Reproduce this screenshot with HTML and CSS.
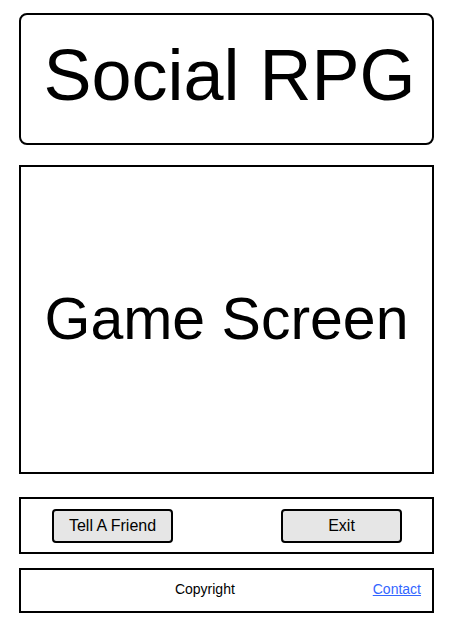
FILE: index.html
```html
<!DOCTYPE html>
<html lang="en">
<head>
<meta charset="UTF-8">
<title>Social RPG</title>
<link rel="stylesheet" href="styles.css">
</head>
<body>
<div class="page">
<header class="titre">Social RPG</header>
<main class="ecran">Game Screen</main>
<div class="barre">
<button class="btn">Tell A Friend</button>
<button class="btn">Exit</button>
</div>
<footer class="pied">
<span class="copyright">Copyright</span>
<a href="#" class="contact">Contact</a>
</footer>
</div>
</body>
</html>
```

FILE: styles.css
```css
body {
margin: 0;
font-family: "Liberation Sans", Arial, sans-serif;
background: #fff;
color: #000;
}
.page {
padding: 13px 20px 0 19px;
display: flex;
flex-direction: column;
}
.titre {
height: 132px;
box-sizing: border-box;
border: 2px solid #000;
border-radius: 8px;
display: flex;
align-items: center;
justify-content: center;
font-size: 72px;
padding: 0 0 8px 6px;
margin-bottom: 20px;
}
.ecran {
height: 309px;
box-sizing: border-box;
border: 2px solid #000;
display: flex;
align-items: center;
justify-content: center;
font-size: 59px;
padding-bottom: 2px;
margin-bottom: 23px;
}
.barre {
height: 57px;
box-sizing: border-box;
border: 2px solid #000;
display: flex;
align-items: center;
justify-content: space-between;
padding: 0 30px 0 31px;
margin-bottom: 14px;
}
.btn {
width: 121px;
height: 34px;
background-color: #e6e6e6;
border: 2px solid #000;
border-radius: 4px;
font-family: inherit;
font-size: 16px;
color: #000;
padding: 0;
}
.pied {
height: 45px;
box-sizing: border-box;
border: 2px solid #000;
display: flex;
align-items: center;
padding: 0 11px 4px 16px;
font-size: 14px;
}
.copyright {
flex: 1;
text-align: center;
}
.contact {
color: #3366ff;
}
```
